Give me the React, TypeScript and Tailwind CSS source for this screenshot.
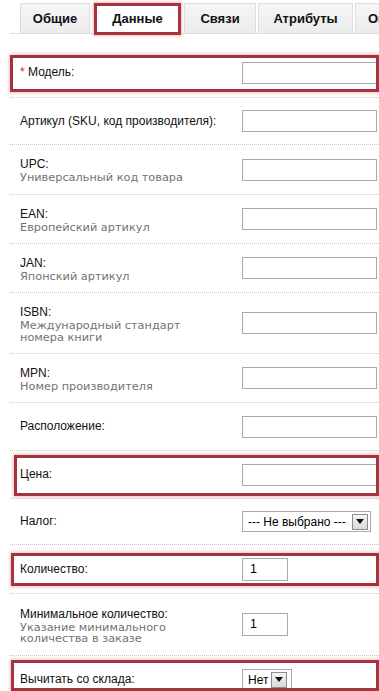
import React from 'react'

// Product edit form (OpenCart-like "Данные" tab) with red highlight annotations

type Row = {
  label: React.ReactNode
  sub?: React.ReactNode
  h: string
  field: 'text' | 'small' | 'select-tax' | 'select-stock'
  value?: string
  box?: string
}

const ROWS: Row[] = [
  { label: <><span className="text-[#e02020]">*</span> Модель:</>, h: 'h-[50px]', field: 'text', box: 'top-[7px] h-[37px] left-0' },
  { label: 'Артикул (SKU, код производителя):', h: 'h-[47px]', field: 'text' },
  { label: 'UPC:', sub: 'Универсальный код товара', h: 'h-[50px]', field: 'text' },
  { label: 'EAN:', sub: 'Европейский артикул', h: 'h-[49px]', field: 'text' },
  { label: 'JAN:', sub: 'Японский артикул', h: 'h-[49px]', field: 'text' },
  { label: 'ISBN:', sub: <>Международный стандарт<br />номера книги</>, h: 'h-[61px]', field: 'text' },
  { label: 'MPN:', sub: 'Номер производителя', h: 'h-[49px]', field: 'text' },
  { label: 'Расположение:', h: 'h-[48px]', field: 'text' },
  { label: 'Цена:', h: 'h-[48px]', field: 'text', box: 'top-[4px] h-[41px] left-[4px]' },
  { label: 'Налог:', h: 'h-[46px]', field: 'select-tax' },
  { label: 'Количество:', h: 'h-[49px]', field: 'small', value: '1', box: 'top-[8px] h-[33px] left-[1px]' },
  { label: 'Минимальное количество:', sub: <>Указание минимального<br />количества в заказе</>, h: 'h-[62px]', field: 'small', value: '1' },
  { label: 'Вычитать со склада:', h: 'h-[48px]', field: 'select-stock', box: 'top-[4px] h-[31px] left-[1px]' },
]

function Arrow() {
  return (
    <span className="flex h-[16px] w-[16px] shrink-0 items-center justify-center border border-[#8c8c8c] bg-gradient-to-b from-[#f4f4f4] to-[#d9d9d9]">
      <svg width="8" height="5" viewBox="0 0 8 5"><path d="M0 0h8L4 5z" fill="#111" /></svg>
    </span>
  )
}

function Field({ row }: { row: Row }) {
  if (row.field === 'text')
    return <div className="h-[22px] w-[135px] border border-[#a9a9a9] bg-white" />
  if (row.field === 'small')
    return (
      <div className="flex h-[23px] w-[46px] items-center border border-[#a9a9a9] bg-white pl-[7px] text-[12.5px] text-black">
        {row.value}
      </div>
    )
  if (row.field === 'select-tax')
    return (
      <div className="flex h-[21px] w-[129px] items-center justify-between whitespace-nowrap border border-[#a9a9a9] bg-white pl-[5px] pr-[2px] text-[12px] text-black">
        <span>--- Не выбрано ---</span>
        <Arrow />
      </div>
    )
  return (
    <div className="flex h-[22px] w-[50px] items-center gap-[3px] whitespace-nowrap border border-[#a9a9a9] bg-white pl-[5px] text-[12px] text-black">
      <span>Нет</span>
      <Arrow />
    </div>
  )
}

const TABS = [
  { name: 'Общие', w: 'w-[70px]', ml: 'ml-0' },
  { name: 'Данные', w: 'w-[87px]', ml: 'ml-[4px]' },
  { name: 'Связи', w: 'w-[72px]', ml: 'ml-[3px]' },
  { name: 'Атрибуты', w: 'w-[95px]', ml: 'ml-[2px]' },
  { name: 'Опции', w: 'w-[70px]', ml: 'ml-[2px]' },
]

export default function App() {
  return (
    <div className="relative h-[691px] w-[379px] overflow-hidden bg-white font-['Liberation_Sans',Arial,sans-serif]">
      <div className="ml-[10px] flex h-[34px] items-end border-b border-[#dddddd] pl-[10px]">
        {TABS.map((t, i) => (
          <div
            key={t.name}
            className={`relative flex h-[30px] shrink-0 items-center border border-b-0 border-[#dddddd] text-[13px] font-bold text-[#111] ${t.w} ${t.ml} ${
              i === 1 ? 'bg-white' : 'bg-gradient-to-b from-[#f6f6f6] to-[#ececec]'
            } ${i === 4 ? 'justify-start pl-[12px]' : 'justify-center'}`}
          >
            {t.name}
            {i === 1 && (
              <span className="pointer-events-none absolute -bottom-[2px] -left-[1px] -right-[1px] -top-[1px] border-[3px] border-[#a5333b] shadow-[0_0_3px_1px_rgba(220,110,110,0.45)]" />
            )}
          </div>
        ))}
      </div>

      <div className="ml-[10px] mt-[14px]">
        {ROWS.map((r, i) => (
          <div key={i} className={`relative flex items-center border-b border-dotted border-[#c8c8c8] pl-[10px] ${r.h}`}>
            <div className={`w-[222px] shrink-0 ${r.sub ? 'pt-[3px]' : ''}`}>
              <div className="text-[12px] leading-[13px] text-[#111]">{r.label}</div>
              {r.sub && (
                <div className="mt-[1px] font-['DejaVu_Sans',Verdana,sans-serif] text-[11.3px] leading-[11.5px] text-[#727272]">{r.sub}</div>
              )}
            </div>
            <Field row={r} />
            {r.box && (
              <span className={`pointer-events-none absolute right-0 border-[3px] border-[#a5333b] shadow-[0_0_3px_1px_rgba(220,110,110,0.45)] ${r.box}`} />
            )}
          </div>
        ))}
      </div>
    </div>
  )
}
